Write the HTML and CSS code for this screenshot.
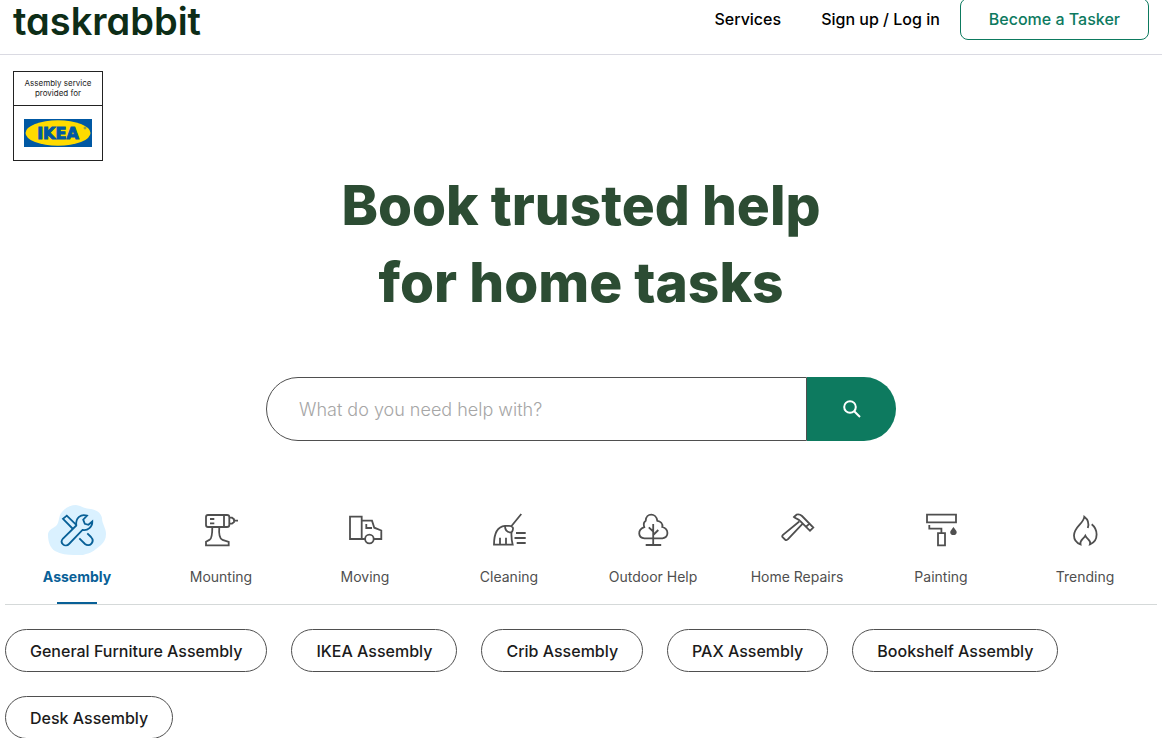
FILE: index.html
```html
<!DOCTYPE html>
<html lang="en">
<head>
  <meta charset="UTF-8">
  <meta name="viewport" content="width=device-width, initial-scale=1">
  <title>Taskrabbit</title>
  <link rel="stylesheet" href="styles.css">
</head>
<body>

  <header class="header">
    <a href="#" class="logo">taskrabbit</a>
    <nav class="nav">
      <a href="#">Services</a>
      <a href="#">Sign up / Log in</a>
      <a href="#" class="nav-button">Become a Tasker</a>
    </nav>
  </header>

  <main>
    <!-- Partner badge -->
    <div class="badge">
      <p class="badge-text">Assembly service provided for</p>
      <div class="badge-logo">
        <svg width="68" height="28" viewBox="0 0 68 28" role="img" aria-label="IKEA">
          <rect width="68" height="28" fill="#0058a3"/>
          <ellipse cx="34" cy="14" rx="32.5" ry="12.8" fill="#ffdb00"/>
          <text x="34" y="19.5" class="badge-name">IKEA</text>
          <circle cx="61" cy="9" r="1" fill="none" stroke="#0058a3" stroke-width="0.5"/>
        </svg>
      </div>
    </div>

    <h1 class="title">Book trusted help<br>for home tasks</h1>

    <form class="search">
      <input type="text" class="search-input" placeholder="What do you need help with?" aria-label="What do you need help with?">
      <button type="submit" class="search-button" aria-label="Search">
        <svg width="18" height="18" viewBox="0 0 18 18" fill="none" stroke="#fff" stroke-width="2">
          <circle cx="7" cy="7" r="5.8"/>
          <path d="M11.2 11.2L17 17"/>
        </svg>
      </button>
    </form>

    <!-- Categories -->
    <nav class="tabs">
      <a href="#" class="tab active">
        <svg class="icon" viewBox="0 0 60 50">
          <path class="blob" d="M1 30C1 25 5 24 9 21C13 17 11 11 15 7C19 2 24 0 29 0C35 1 38 4 44 4C50 5 54 8 55 13C55 19 59 23 59 29C59 34 57 37 54 40C49 44 45 48 39 49C35 51 31 50 27 50C20 50 14 49 8 46C3 43 1 36 1 30Z"/>
          <path d="M26 24L16 13.8L19.8 10.6L29.5 20.2"/>
          <path d="M29.3 20.5L16 33.5C14.2 35.6 14.4 38 16 39.4C17.8 41 20.4 40.6 22 39L35.5 25C40.8 26 45.5 22 45.3 16.5L41.5 19.8L37.8 18.8L36.2 14.6L40 10.7C34 8.5 28.3 12.8 29.3 20.5Z"/>
          <path d="M32.3 33.3L38 39C40 40.7 42.7 40.6 44.2 38.8C46 36.8 45.9 34 44 32L40.3 28.3"/>
        </svg>
        <span>Assembly</span>
      </a>
      <a href="#" class="tab">
        <svg class="icon" viewBox="0 0 60 50">
          <path d="M17 10H33V22H17Q15 22 15 20V12Q15 10 17 10ZM33 10H36Q38.3 10 38.3 12V20Q38.3 22 36 22H33M38.3 12.7H41L43 14.3V17L41 18.7H38.3M43 15.7H47M19 14H23.3M19 18.3H23.3"/>
          <path d="M21.3 22C21.3 30 20.8 33.4 18.8 34.6L15 36.7V40.3H37.7V37L31.5 34.8C28.5 33.8 27.7 29 28.3 22"/>
        </svg>
        <span>Mounting</span>
      </a>
      <a href="#" class="tab">
        <svg class="icon" viewBox="0 0 60 50">
          <path d="M30 34H15V11.7H26.7V34M26.7 15.7H37L39.3 22.7L46.3 25.5V34H38.7M31.3 19V23H37"/>
          <circle cx="34.4" cy="34" r="4.3"/>
        </svg>
        <span>Moving</span>
      </a>
      <a href="#" class="tab">
        <svg class="icon" viewBox="0 0 60 50">
          <path d="M42.3 9L32.5 21M15 39.7H33.7C32.5 35 32.3 31 32.5 27.5C35 24 34.5 20.8 30 20.8H26C18.5 21.5 15 29 15 39.7ZM26 21C26 25.5 28.5 27.5 32.5 27.5M21 32.7V39.3M27 32.7V39.3M37 28H46.7M35.5 33H46.7M37.7 38H46.7"/>
        </svg>
        <span>Cleaning</span>
      </a>
      <a href="#" class="tab">
        <svg class="icon" viewBox="0 0 60 50">
          <path d="M21.5 33.3H39.5C46 32.5 46.2 24 39.3 22C40 18.6 37.5 16.2 34.3 15.8C33.2 7.6 23 7.7 22.7 15.8C20.6 17.3 20.5 20 21.3 22.2C14 25 15 32.8 21.5 33.3ZM30.2 19V40M22.7 40H38.2M25.8 22.3L30.2 26.5M35.3 25L30.2 30"/>
        </svg>
        <span>Outdoor Help</span>
      </a>
      <a href="#" class="tab">
        <svg class="icon" viewBox="0 0 60 50">
          <path d="M27 12L29.7 9.5C31.5 9 33.5 9.6 35 11L46.3 22.5L43 25.8L33.3 16.2C31.5 13.6 29.5 14.3 27 12ZM39 21.8L42.4 18.6"/>
          <path d="M32.3 16.5L16 29.8C15 30.8 15 31.6 15.8 32.4L18 34.5C19 35.4 20 35.3 20.8 34.3L35.7 18.7"/>
        </svg>
        <span>Home Repairs</span>
      </a>
      <a href="#" class="tab">
        <svg class="icon" viewBox="0 0 60 50">
          <path d="M16 9.7H45V17.3H16ZM18.3 20V23.7H30.4V28M27 28.2H34V40.4H27Z"/>
          <path class="drop" d="M42.4 22C44 24.4 45.7 25.6 45.7 27.2C45.7 31 39.2 31 39.2 27.2C39.2 25.6 41 24.4 42.4 22Z"/>
        </svg>
        <span>Painting</span>
      </a>
      <a href="#" class="tab">
        <svg class="icon" viewBox="0 0 60 50">
          <path d="M32.8 23C34.2 18.5 33 14.5 29.3 11.7C28.8 18.5 19 21.5 19 30.5C19 34.8 21.3 37.8 25.5 39.3C24.5 35.3 28 34.5 30.3 30.7C32 34.5 36.5 35.3 35 39.3C39 37.8 41.6 34.5 41.6 29.5C41.6 25.5 40 22 36.7 19.3"/>
        </svg>
        <span>Trending</span>
      </a>
    </nav>

    <div class="chips">
      <a href="#" class="chip">General Furniture Assembly</a>
      <a href="#" class="chip">IKEA Assembly</a>
      <a href="#" class="chip">Crib Assembly</a>
      <a href="#" class="chip">PAX Assembly</a>
      <a href="#" class="chip">Bookshelf Assembly</a>
      <a href="#" class="chip">Desk Assembly</a>
    </div>
  </main>

</body>
</html>
```

FILE: styles.css
```css
* {
  box-sizing: border-box;
}

body {
  margin: 0;
  background: #fff;
  color: #1b1b1b;
  font-family: Inter, "Liberation Sans", sans-serif;
  font-size: 16px;
  overflow-x: hidden;
}

a {
  color: inherit;
  text-decoration: none;
}

/* Header */
.header {
  display: flex;
  justify-content: space-between;
  align-items: center;
  height: 71px;
  margin-top: -16px;
  padding: 0 13px;
  border-bottom: 1px solid #dadae2;
}

.logo {
  padding-top: 4px;
  color: #0d2d17;
  font-size: 38px;
  font-weight: 600;
  line-height: 38px;
  font-feature-settings: "cv11";
}

.nav {
  display: flex;
  align-items: center;
  color: #000;
  font-weight: 500;
}

.nav a {
  margin-left: 40px;
}

.nav .nav-button {
  margin-left: 20px;
  padding: 0 28px;
  border: 1px solid #0d7a5f;
  border-radius: 8px;
  color: #0d7a5f;
  line-height: 40px;
}

/* Badge */
.badge {
  width: 90px;
  height: 90px;
  margin: 16px 13px 0;
  border: 1px solid #222;
}

.badge-text {
  height: 34px;
  margin: 0;
  padding: 6px 8px 0;
  border-bottom: 1px solid #222;
  font-size: 8px;
  line-height: 10px;
  text-align: center;
}

.badge-logo {
  display: flex;
  justify-content: center;
  padding-top: 13px;
}

.badge-name {
  fill: #0058a3;
  stroke: #0058a3;
  stroke-width: 1;
  font-family: "DejaVu Sans", sans-serif;
  font-size: 16px;
  font-weight: 700;
  text-anchor: middle;
}

/* Hero */
.title {
  margin: 6px 0 56px;
  color: #2c4c33;
  font-size: 55px;
  font-weight: 800;
  line-height: 77px;
  text-align: center;
}

.search {
  display: flex;
  width: 90%;
  max-width: 630px;
  height: 64px;
  margin: 0 auto;
}

.search-input {
  flex: 1;
  min-width: 0;
  padding: 0 32px;
  border: 1px solid #4f4f4f;
  border-radius: 32px 0 0 32px;
  font-family: inherit;
  font-size: 18px;
  font-weight: 300;
}

.search-input::placeholder {
  color: #a6a6a6;
}

.search-button {
  display: flex;
  align-items: center;
  justify-content: center;
  width: 89px;
  padding: 0;
  border: 0;
  border-radius: 0 32px 32px 0;
  background: #0d7a5f;
}

/* Tabs */
.tabs {
  display: grid;
  grid-template-columns: repeat(8, 1fr);
  margin: 64px 5px 0;
  border-bottom: 1px solid #d5d9d9;
}

.tab {
  position: relative;
  display: flex;
  flex-direction: column;
  align-items: center;
  height: 99px;
  color: #4f4f4f;
  font-size: 14px;
  line-height: 20px;
}

.icon {
  width: 60px;
  height: 50px;
  margin-bottom: 12px;
  fill: none;
  stroke: currentColor;
  stroke-width: 1.8;
}

.icon .blob {
  fill: #daf1ff;
  stroke: none;
}

.icon .drop {
  fill: currentColor;
  stroke: none;
}

.tab.active {
  color: #086097;
  font-weight: 700;
}

.tab.active::after {
  content: "";
  position: absolute;
  bottom: 0;
  width: 40px;
  height: 2px;
  background: #086097;
}

/* Chips */
.chips {
  display: flex;
  flex-wrap: wrap;
  gap: 24px;
  margin: 24px 5px 0;
}

.chip {
  padding: 1px 24px 0;
  border: 1px solid #4f4f4f;
  border-radius: 22px;
  font-weight: 500;
  line-height: 40px;
}
```
